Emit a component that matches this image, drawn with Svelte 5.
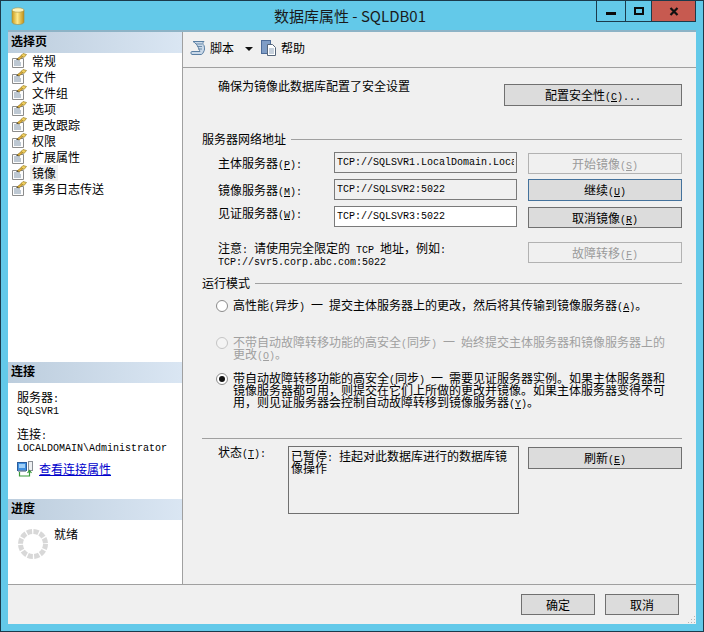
<script>
	const pages = ['常规', '文件', '文件组', '选项', '更改跟踪', '权限', '扩展属性', '镜像', '事务日志传送'];

	// splits a label into CJK and latin runs, & marks the mnemonic letter
	const parts = (s) =>
		[...s.matchAll(/&(.)|[\x20-\x25\x27-\x7e]+|[^\x20-\x7e]+/g)].map((m) => ({
			text: m[1] ?? m[0],
			latin: /^[\x20-\x7e]/.test(m[1] ?? m[0]),
			ul: !!m[1]
		}));
</script>

{#snippet t(s)}<span class="line">{#each parts(s) as p}<span class:m={p.latin} class:u={p.ul}>{p.text}</span>{/each}</span>{/snippet}

{#snippet pageIcon()}
	<svg width="16" height="16" viewBox="0 0 16 16">
		<path d="M1.5 5.5h8l3 0v9h-11z" fill="#fdfdfd" stroke="#8c8c8c" />
		<path d="M3 8h6M3 10h7M3 12h7" stroke="#7f93a8" />
		<path d="M6 6l5-4 2 1-5 4z" fill="#e3b23c" stroke="#8a6d1f" stroke-width="0.7" />
		<path d="M10 2.5l2-2 3.5 1-2.5 3z" fill="#f2d060" stroke="#98802a" stroke-width="0.7" />
		<path d="M5 7l1-1 2 1z" fill="#333" />
	</svg>
{/snippet}

<div class="window">
	<div class="titlebar">
		<svg class="dbicon" width="14" height="18" viewBox="0 0 14 18">
			<defs>
				<linearGradient id="gold" x1="0" x2="1" y1="0" y2="0">
					<stop offset="0" stop-color="#c89a1c" />
					<stop offset="0.45" stop-color="#ffe98a" />
					<stop offset="1" stop-color="#c08f14" />
				</linearGradient>
			</defs>
			<path d="M1 3v12c0 1.5 2.5 2.5 6 2.5s6-1 6-2.5V3z" fill="url(#gold)" stroke="#9c8a4a" stroke-width="0.6" />
			<ellipse cx="7" cy="3" rx="6" ry="2.2" fill="#fff3b8" stroke="#a8944c" stroke-width="0.6" />
		</svg>
		<div class="title">数据库属性 - SQLDB01</div>
		<div class="controls">
			<div class="ctl min"><span class="minbar"></span></div>
			<div class="ctl max"><span class="maxbox"></span></div>
			<div class="ctl close">
				<svg width="10" height="9" viewBox="0 0 10 9"><path d="M1.5 1l7 7M8.5 1l-7 7" stroke="#111" stroke-width="2.2" /></svg>
			</div>
		</div>
	</div>

	<div class="client">
		<div class="split">
			<aside class="side">
				<div class="head">选择页</div>
				<ul class="pages">
					{#each pages as p}
						<li>
							{@render pageIcon()}
							<span class="pagename" class:sel={p === '镜像'}>{p}</span>
						</li>
					{/each}
				</ul>
				<div class="head">连接</div>
				<div class="conn">
					{@render t('服务器:')}
					{@render t('SQLSVR1')}
					<div class="gap13"></div>
					{@render t('连接:')}
					{@render t('LOCALDOMAIN\\Administrator')}
					<div class="linkrow">
						<svg width="16" height="16" viewBox="0 0 16 16">
							<rect x="0.5" y="1.5" width="9" height="8" fill="#3f8fe0" stroke="#2a5d9c" />
							<rect x="2" y="3" width="6" height="4" fill="#9fd0f8" />
							<rect x="1" y="9.5" width="8" height="1.5" fill="#9aa7b5" />
							<rect x="11.5" y="0.5" width="4" height="9" fill="#eef0f2" stroke="#8a8f96" />
							<path d="M2.5 11v4h10v-5M10.5 12l2-2.5 2 2.5" fill="none" stroke="#3a9a3a" stroke-width="1.2" />
						</svg>
						<a href="#conn" class="link">查看连接属性</a>
					</div>
				</div>
				<div class="head">进度</div>
				<div class="progress">
					<svg class="spin" width="30" height="30" viewBox="0 0 30 30">
						<circle cx="15" cy="15" r="12.5" fill="none" stroke="#d8d8d8" stroke-width="5" stroke-dasharray="5.2 1.35" />
					</svg>
					<span class="ready">就绪</span>
				</div>
			</aside>

			<main class="main">
				<div class="toolbar">
					<svg width="16" height="16" viewBox="0 0 16 16">
						<path d="M3 1.5h11c-1.5 1-1.5 3 0 4 .8 2 .8 5-.5 6.5-.6 1.5-1.5 2.5-2.5 2.5H2c-1.500-.3-1.500-3 0-3h8c-1.500-3-2-7-7-10z" fill="#c9d8e8" stroke="#5a7fa3" />
						<path d="M6 4h6M7 6.500h5M8 9h4" stroke="#6c8cab" />
					</svg>
					<span class="tb-text">脚本</span>
					<span class="arrow"></span>
					<svg class="help" width="16" height="16" viewBox="0 0 16 16">
						<rect x="0.500" y="0.500" width="9" height="13" fill="#7f9dc6" stroke="#4d6c99" />
						<path d="M6.500 4.500h5l3 3v8h-8z" fill="#fff" stroke="#55657a" />
						<path d="M8 9h5M8 11h5M8 13h5" stroke="#8fa3ba" />
					</svg>
					<span class="tb-text">帮助</span>
				</div>

				<div class="body">
					<div class="top-row">
						<div class="top-text">{@render t('确保为镜像此数据库配置了安全设置')}</div>
						<button class="btn config">{@render t('配置安全性(&C)...')}</button>
					</div>

					<div class="section net">
						{@render t('服务器网络地址')}<span class="rule"></span>
					</div>

					<div class="grid">
						<div class="lab">{@render t('主体服务器(&P):')}</div>
						<input class="field" readonly value="TCP://SQLSVR1.LocalDomain.Local:5022" />
						<button class="btn off b1">{@render t('开始镜像(&S)')}</button>

						<div class="lab">{@render t('镜像服务器(&M):')}</div>
						<input class="field" readonly value="TCP://SQLSVR2:5022" />
						<button class="btn focus">{@render t('继续(&U)')}</button>

						<div class="lab third">{@render t('见证服务器(&W):')}</div>
						<input class="field white" readonly value="TCP://SQLSVR3:5022" />
						<button class="btn b1">{@render t('取消镜像(&R)')}</button>

						<div class="note">
							{@render t('注意: 请使用完全限定的 TCP 地址，例如:')}
							{@render t('TCP://svr5.corp.abc.com:5022')}
						</div>
						<button class="btn off b4">{@render t('故障转移(&F)')}</button>
					</div>

					<div class="section mode">
						{@render t('运行模式')}<span class="rule"></span>
					</div>

					<div class="radio r1">
						<span class="dot"></span>
						<div>{@render t('高性能(异步) 一 提交主体服务器上的更改，然后将其传输到镜像服务器(&A)。')}</div>
					</div>
					<div class="radio r2 dim">
						<span class="dot"></span>
						<div>
							{@render t('不带自动故障转移功能的高安全(同步) 一 始终提交主体服务器和镜像服务器上的')}
							{@render t('更改(&O)。')}
						</div>
					</div>
					<div class="radio r3">
						<span class="dot on"></span>
						<div>
							{@render t('带自动故障转移功能的高安全(同步) 一 需要见证服务器实例。如果主体服务器和')}
							{@render t('镜像服务器都可用，则提交在它们上所做的更改并镜像。如果主体服务器变得不可')}
							{@render t('用，则见证服务器会控制自动故障转移到镜像服务器(&Y)。')}
						</div>
					</div>

					<div class="divider"></div>

					<div class="status">
						<div class="status-lab">{@render t('状态(&T):')}</div>
						<div class="status-box">
							{@render t('已暂停: 挂起对此数据库进行的数据库镜')}
							{@render t('像操作')}
						</div>
						<button class="btn refresh">{@render t('刷新(&E)')}</button>
					</div>
				</div>
			</main>
		</div>

		<div class="footer">
			<button class="btn small">{@render t('确定')}</button>
			<button class="btn small">{@render t('取消')}</button>
			<svg class="grip" width="8" height="8" viewBox="0 0 8 8">
				<path d="M6 0h1v1H6zM3 3h1v1H3zM6 3h1v1H6zM0 6h1v1H0zM3 6h1v1H3zM6 6h1v1H6z" fill="#b4b4b4" />
			</svg>
		</div>
	</div>
</div>

<style>
	:global(body) {
		margin: 0;
	}

	.window {
		box-sizing: border-box;
		width: 704px;
		height: 632px;
		display: flex;
		flex-direction: column;
		background: #63c9e9;
		border: 1px solid #1b3a4b;
		font-family: "Noto Sans CJK SC", "Liberation Sans", sans-serif;
		font-size: 12px;
		line-height: 12px;
		color: #000;
	}

	.line {
		display: block;
		height: 12px;
		line-height: 12px;
		white-space: pre;
	}

	.m {
		font-family: "Liberation Mono", monospace;
		font-size: 10px;
		white-space: pre;
	}

	.u {
		text-decoration: underline;
	}

	.titlebar {
		height: 29px;
		display: flex;
		align-items: flex-start;
		flex: none;
	}

	.dbicon {
		margin: 6px 0 0 10px;
	}

	.title {
		margin: 6px 0 0 249px;
		width: 322px;
		font-size: 15px;
		line-height: 18px;
		color: #1a1a1a;
		white-space: nowrap;
	}

	.controls {
		display: flex;
		height: 21px;
	}

	.ctl {
		box-sizing: border-box;
		height: 21px;
		display: flex;
		align-items: center;
		justify-content: center;
		border-left: 1px solid #1b3a4b;
		border-bottom: 1px solid #1b3a4b;
	}

	.min {
		width: 29px;
	}

	.minbar {
		width: 10px;
		height: 3px;
		margin-top: 4px;
		background: #0b0b0b;
	}

	.max {
		width: 26px;
	}

	.maxbox {
		box-sizing: border-box;
		width: 10px;
		height: 8px;
		border: 2px solid #0b0b0b;
	}

	.close {
		width: 45px;
		background: #c75a50;
		border-right: 1px solid #1b3a4b;
	}

	.client {
		flex: 1;
		display: flex;
		flex-direction: column;
		margin: 0 7px 7px 7px;
		background: #f0f0f0;
		border-top: 2px solid #8db3c6;
	}

	.split {
		height: 552px;
		display: flex;
		border-bottom: 1px solid #a0a0a0;
		flex: none;
	}

	.side {
		width: 174px;
		flex: none;
		display: flex;
		flex-direction: column;
		background: #fff;
		border-right: 1px solid #a0a0a0;
	}

	.head {
		height: 21px;
		flex: none;
		padding-left: 3px;
		font-weight: 700;
		line-height: 18px;
		background: linear-gradient(to right, #bccddd, #dae6f3);
	}

	.pages {
		flex: 1;
		list-style: none;
		margin: 0;
		padding: 0;
	}

	.pages li {
		height: 16px;
		display: flex;
		align-items: center;
		padding-left: 3px;
		gap: 3px;
	}

	.pagename {
		line-height: 16px;
		padding: 0 2px;
	}

	.sel {
		background: #f0f0f0;
	}

	.conn {
		height: 108px;
		flex: none;
		padding: 8px 0 0 9px;
	}

	.gap13 {
		height: 13px;
	}

	.linkrow {
		display: flex;
		align-items: center;
		gap: 6px;
		margin-top: 9px;
		height: 16px;
	}

	.link {
		color: #0000cc;
		text-decoration: underline;
	}

	.progress {
		height: 64px;
		flex: none;
		display: flex;
		align-items: flex-start;
		padding-left: 10px;
		box-sizing: border-box;
	}

	.spin {
		margin-top: 9px;
	}

	.ready {
		margin: 8px 0 0 6px;
	}

	.main {
		flex: 1;
		min-width: 0;
	}

	.toolbar {
		box-sizing: border-box;
		height: 36px;
		display: flex;
		align-items: center;
		padding: 0 0 3px 7px;
		border-bottom: 1px solid #a0a0a0;
	}

	.tb-text {
		margin-left: 4px;
	}

	.arrow {
		width: 0;
		height: 0;
		margin: 2px 0 0 11px;
		border: 4px solid transparent;
		border-top: 4px solid #111;
		border-bottom: 0;
	}

	.help {
		margin-left: 8px;
	}

	.body {
		padding: 12px 14px 0 19px;
	}

	.top-row {
		display: flex;
		justify-content: space-between;
	}

	.top-text {
		padding-left: 16px;
	}

	.btn {
		box-sizing: border-box;
		display: flex;
		align-items: center;
		justify-content: center;
		padding: 0;
		margin: 0;
		font: inherit;
		color: #000;
		background: #dcdcdc;
		border: 1px solid #707070;
		border-radius: 0;
	}

	.config {
		width: 178px;
		height: 22px;
		margin-top: 4px;
	}

	.section {
		display: flex;
		align-items: center;
		gap: 5px;
	}

	.rule {
		flex: 1;
		height: 1px;
		background: #a0a0a0;
	}

	.net {
		margin-top: 27px;
	}

	.grid {
		display: grid;
		grid-template-columns: 116px 183px 165px;
		grid-auto-rows: 22px;
		row-gap: 5px;
		margin-top: 7px;
		padding-left: 16px;
	}

	.grid .btn {
		width: 154px;
		margin-left: 11px;
		height: 21px;
	}

	.lab {
		margin-top: 5px;
	}

	.lab.third {
		margin-top: 1px;
	}

	.field {
		box-sizing: border-box;
		width: 183px;
		height: 21px;
		padding: 0 2px;
		margin: 0;
		border: 1px solid #7a7a7a;
		border-radius: 0;
		outline: none;
		background: #f0f0f0;
		color: #000;
		font-family: "Liberation Mono", monospace;
		font-size: 10px;
	}

	.field.white {
		background: #fff;
	}

	.grid .b1 {
		margin-top: 1px;
	}

	.grid .focus {
		height: 22px;
		border-color: #44729c;
	}

	.off {
		background: #f0f0f0;
		border-color: #b2b2b2;
		color: #9a9a9a;
	}

	.grid .off {
		background: #f0f0f0;
	}

	.note {
		grid-column: 1 / 3;
		grid-row: 4 / span 2;
		margin-top: 9px;
	}

	.grid .b4 {
		grid-column: 3;
		grid-row: 4;
		margin-top: 9px;
	}

	.mode {
		margin-top: -5px;
	}

	.radio {
		display: flex;
		gap: 5px;
		padding-left: 14px;
	}

	.r1 {
		margin-top: 10px;
	}

	.r2 {
		margin-top: 24px;
	}

	.r3 {
		margin-top: 12px;
	}

	.dim {
		color: #a0a0a0;
	}

	.dot {
		box-sizing: border-box;
		flex: none;
		width: 12px;
		height: 12px;
		margin-top: 1px;
		display: flex;
		align-items: center;
		justify-content: center;
		border: 1px solid #8b8b8b;
		border-radius: 50%;
		background: #fff;
	}

	.dim .dot {
		border-color: #c4c4c4;
		background: #f4f4f4;
	}

	.dot.on::after {
		content: "";
		width: 6px;
		height: 6px;
		border-radius: 50%;
		background: #111;
	}

	.divider {
		height: 1px;
		margin-top: 30px;
		background: #a0a0a0;
	}

	.status {
		display: flex;
		margin-top: 7px;
		padding-left: 16px;
	}

	.status-lab {
		width: 70px;
		flex: none;
	}

	.status-box {
		box-sizing: border-box;
		width: 231px;
		height: 68px;
		padding: 3px 2px;
		border: 1px solid #707070;
	}

	.refresh {
		width: 154px;
		height: 22px;
		margin: 1px 0 0 9px;
	}

	.footer {
		position: relative;
		flex: 1;
		display: flex;
		justify-content: flex-end;
		gap: 10px;
		padding: 9px 17px 0 0;
	}

	.small {
		width: 74px;
		height: 21px;
	}

	.grip {
		position: absolute;
		right: 0;
		bottom: 0;
	}
</style>
